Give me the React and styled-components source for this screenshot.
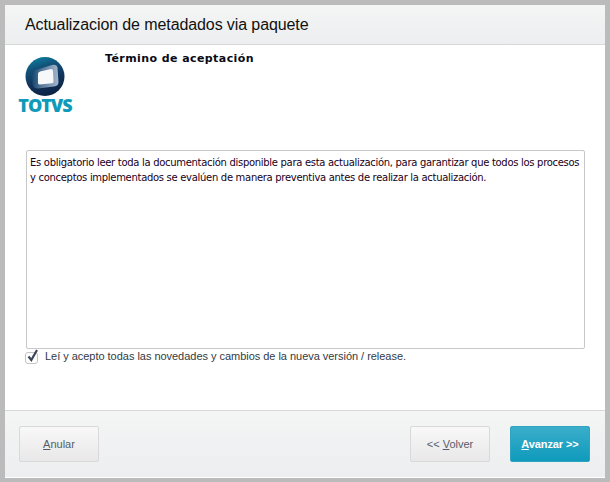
import React from 'react';
import styled, {createGlobalStyle} from 'styled-components';

const GlobalStyle = createGlobalStyle`
    html, body {
        margin: 0;
        padding: 0;
        background: #bbbbbb;
    }
`;

const Frame = styled.div`
    box-sizing: border-box;
    width: 610px;
    height: 482px;
    padding: 5px 5px 4px 5px;
    background: #bbbbbb;
`;

const Dialog = styled.div`
    height: 100%;
    display: flex;
    flex-direction: column;
    background: #ffffff;
    font-family: "Liberation Sans", Arial, sans-serif;
`;

const Header = styled.div`
    box-sizing: border-box;
    height: 40px;
    flex: none;
    display: flex;
    align-items: center;
    padding: 0 0 0 20px;
    background: linear-gradient(#f4f5f5, #eceeef);
    border-bottom: 1px solid #d8d8d8;
`;

const HeaderTitle = styled.h1`
    margin: 0;
    font-size: 16px;
    font-weight: 400;
    letter-spacing: -0.1px;
    color: #111111;
`;

const Body = styled.div`
    flex: 1;
    display: flex;
    flex-direction: column;
    padding: 0 20px 0 21px;
`;

const Top = styled.div`
    height: 105px;
    display: flex;
    flex: none;
`;

const LogoBlock = styled.div`
    width: 54px;
    flex: none;
    padding: 12px 0 0 0;
    margin-left: -8px;
    display: flex;
    flex-direction: column;
    align-items: center;
`;

const LogoWord = styled.span`
    font-family: "Open Sans", sans-serif;
    font-size: 18px;
    line-height: 18px;
    font-weight: 800;
    letter-spacing: -1px;
    color: #0f9ab9;
`;

const TermTitle = styled.h2`
    margin: 7px 0 0 33px;
    font-family: "DejaVu Sans", sans-serif;
    font-size: 11px;
    line-height: 13px;
    font-weight: 700;
    letter-spacing: 0.42px;
    color: #0a0a14;
`;

const TextBox = styled.div`
    box-sizing: border-box;
    width: 559px;
    height: 199px;
    flex: none;
    padding: 4px 3px;
    border: 1px solid #c8c8c8;
    border-radius: 2px;
    font-family: "DejaVu Sans", sans-serif;
    font-size: 10px;
    line-height: 15px;
    letter-spacing: -0.3px;
    color: #200020;
`;

const AcceptRow = styled.label`
    display: flex;
    align-items: center;
    gap: 7px;
    height: 14px;
    margin: 0 0 0 -1px;
    font-size: 11px;
    letter-spacing: -0.03px;
    color: #333a45;
`;

const CheckBox = styled.span`
    box-sizing: border-box;
    position: relative;
    display: block;
    flex: none;
    width: 13px;
    height: 12px;
    margin-top: 4px;
    border: 1px solid #c4c4c4;
    border-radius: 3px;
    background: #ffffff;
`;

const CheckMark = styled.svg`
    position: absolute;
    left: 0;
    top: -5px;
    width: 13px;
    height: 15px;
`;

const Footer = styled.div`
    box-sizing: border-box;
    height: 68px;
    flex: none;
    display: flex;
    align-items: flex-start;
    padding: 15px 15px 0 14px;
    background: linear-gradient(#f4f5f5, #eceeef);
    border-top: 1px solid #d8d8d8;
    border-bottom: 1px solid #ffffff;
`;

const Spacer = styled.div`
    flex: 1;
`;

const Button = styled.button`
    box-sizing: border-box;
    width: 80px;
    height: 36px;
    margin-left: ${({$gap}) => $gap || 0}px;
    padding: 0;
    border: 1px solid ${({$primary}) => ($primary ? '#2fa3c0' : '#d9d9d9')};
    border-radius: 2px;
    background: ${({$primary}) =>
        $primary
            ? 'linear-gradient(#3aaecb, #0f9abc)'
            : 'linear-gradient(#f8f8f8, #e8e8e8)'};
    font-family: "Liberation Sans", Arial, sans-serif;
    font-size: 11px;
    font-weight: ${({$primary}) => ($primary ? 700 : 400)};
    letter-spacing: ${({$primary}) => ($primary ? '-0.1px' : '0')};
    color: ${({$primary}) => ($primary ? '#ffffff' : '#555c6b')};

    u {
        text-underline-offset: 1px;
    }
`;

const Logo = () => (
    <svg width="40" height="39" viewBox="0 0 40 39">
        <defs>
            <linearGradient id="rim" x1="0.2" y1="0" x2="0.5" y2="1">
                <stop offset="0%" stopColor="#0d7fa2" />
                <stop offset="30%" stopColor="#125078" />
                <stop offset="65%" stopColor="#12325a" />
                <stop offset="100%" stopColor="#0b2444" />
            </linearGradient>
            <linearGradient id="band" x1="0" y1="0.5" x2="1" y2="0.5">
                <stop offset="0%" stopColor="#14466e" />
                <stop offset="40%" stopColor="#5d7c9e" />
                <stop offset="100%" stopColor="#a3b6cc" />
            </linearGradient>
        </defs>
        <circle cx="20" cy="19.5" r="19.5" fill="url(#rim)" />
        <path
            d="M7 18Q7 14 11 13L27 8Q32 7 32.5 11L33.5 25Q33.5 29 29 29.5L13 31.5Q8 31.5 7.5 27Z"
            fill="url(#band)"
        />
        <path
            d="M13 17Q13 15 15 14.5L26 12Q28 12 28 14L28.5 24.5Q28.5 26 27 26.2L15 27.5Q13 27.5 13 26Z"
            fill="#f6f8fa"
        />
    </svg>
);

export default function App() {
    return (
        <Frame>
            <GlobalStyle />
            <Dialog>
                <Header>
                    <HeaderTitle>Actualizacion de metadados via paquete</HeaderTitle>
                </Header>
                <Body>
                    <Top>
                        <LogoBlock>
                            <Logo />
                            <LogoWord>TOTVS</LogoWord>
                        </LogoBlock>
                        <TermTitle>Término de aceptación</TermTitle>
                    </Top>
                    <TextBox>
                        Es obligatorio leer toda la documentación disponible para esta
                        actualización, para garantizar que todos los procesos y conceptos
                        implementados se evalúen de manera preventiva antes de realizar la
                        actualización.
                    </TextBox>
                    <AcceptRow>
                        <CheckBox>
                            <CheckMark viewBox="0 0 13 15">
                                <path
                                    d="M2.5 8.5 5.3 12 11 2"
                                    fill="none"
                                    stroke="#3c4658"
                                    strokeWidth="2.2"
                                />
                            </CheckMark>
                        </CheckBox>
                        Leí y acepto todas las novedades y cambios de la nueva versión / release.
                    </AcceptRow>
                </Body>
                <Footer>
                    <Button>
                        <u>A</u>nular
                    </Button>
                    <Spacer />
                    <Button>
                        {'<< '}
                        <u>V</u>olver
                    </Button>
                    <Button $primary $gap={20}>
                        <u>A</u>vanzar {'>>'}
                    </Button>
                </Footer>
            </Dialog>
        </Frame>
    );
}
